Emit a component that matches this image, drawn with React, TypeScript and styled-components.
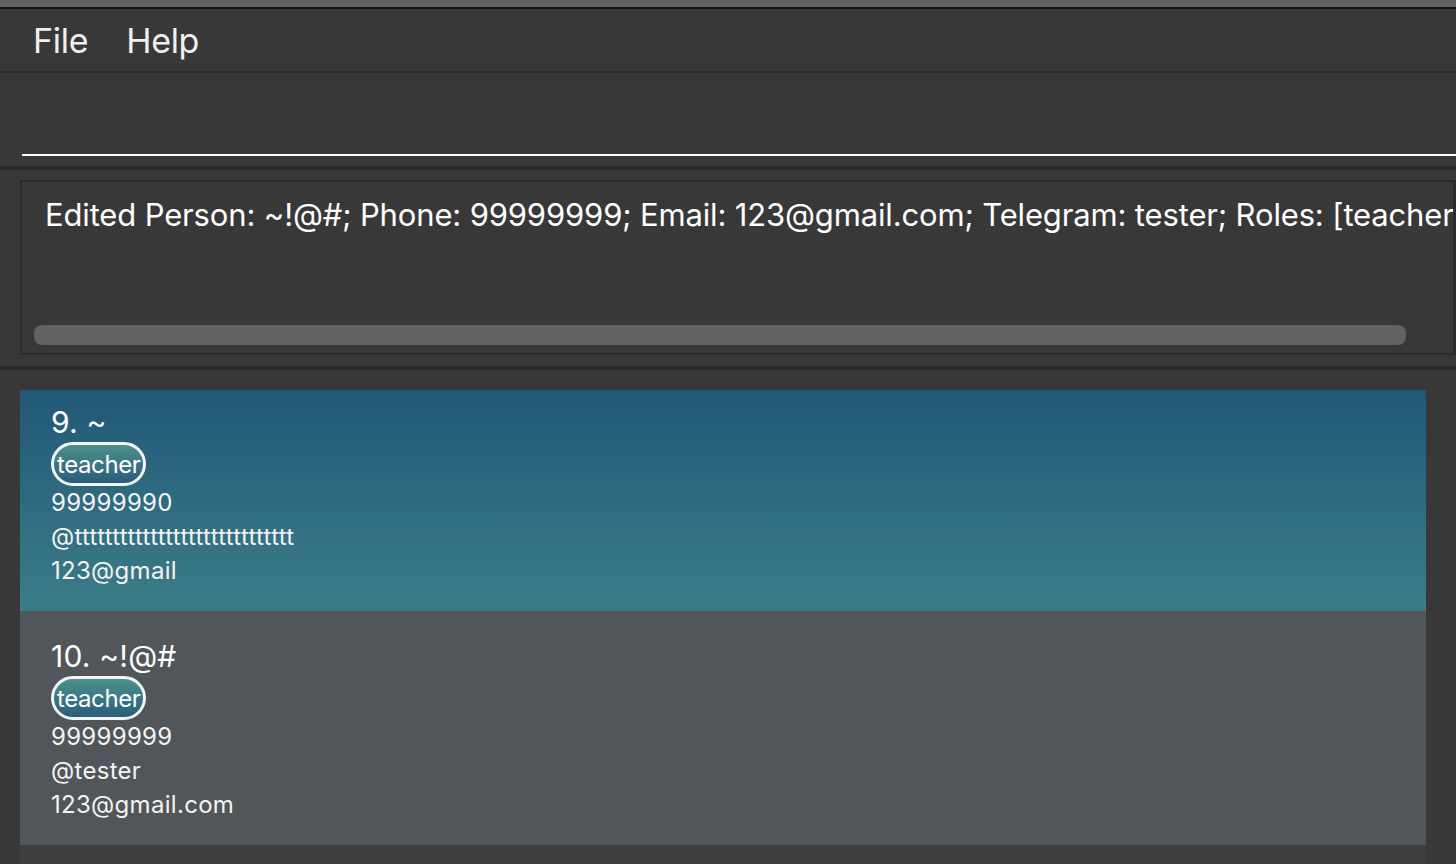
import React from "react";
import styled, { createGlobalStyle } from "styled-components";

const Global = createGlobalStyle`
  html, body { margin: 0; padding: 0; background: #383838; overflow: hidden; }
  body { font-family: Inter, "Noto Sans", "Liberation Sans", sans-serif; }
  #root { width: 1456px; height: 864px; }
`;

const Window = styled.div`
  width: 1456px;
  height: 864px;
  display: flex;
  flex-direction: column;
  background: #383838;
  overflow: hidden;
`;

const TitleStrip = styled.div`
  height: 7px;
  background: #616161;
  border-bottom: 2px solid #141414;
  flex: none;
`;

const MenuBar = styled.div`
  height: 62px;
  flex: none;
  display: flex;
  align-items: center;
  gap: 38px;
  padding-left: 33px;
  border-bottom: 2px solid #2b2b2b;
  background: #383838;
`;

const MenuItem = styled.span`
  color: #efefef;
  font-size: 34px;
  letter-spacing: -0.3px;
`;

const CommandSection = styled.div`
  height: 93px;
  flex: none;
  display: flex;
  align-items: flex-end;
  padding: 0 0 10px 22px;
  box-sizing: border-box;
`;

const CommandInput = styled.div`
  flex: 1;
  height: 40px;
  border-bottom: 2px solid #ffffff;
`;

const Divider = styled.div`
  height: 4px;
  flex: none;
  background: #2b2b2b;
`;

const ResultSection = styled.div`
  height: 196px;
  flex: none;
  box-sizing: border-box;
  padding: 10px 0 11px 20px;
  display: flex;
`;

const ResultBox = styled.div`
  flex: 1;
  border: 2px solid #2b2b2b;
  border-right-width: 3px;
  display: flex;
  flex-direction: column;
  justify-content: space-between;
  padding: 14px 0 8px 12px;
  overflow: hidden;
  min-width: 0;
`;

const ResultText = styled.div`
  color: #ffffff;
  font-size: 31px;
  white-space: nowrap;
  padding-left: 11px;
  letter-spacing: -0.15px;
`;

const ScrollBar = styled.div`
  width: 1372px;
  height: 20px;
  border-radius: 8px;
  background: #626262;
`;

const ListSection = styled.div`
  flex: 1;
  min-height: 0;
  padding: 20px 30px 0 20px;
  display: flex;
`;

const ListViewport = styled.div`
  flex: 1;
  background: #3c3e40;
  overflow: hidden;
`;

const ListInner = styled.div`
  margin-top: -13px;
  display: flex;
  flex-direction: column;
`;

const Card = styled.div<{ $selected?: boolean }>`
  height: 234px;
  box-sizing: border-box;
  padding: 25px 0 0 31px;
  display: flex;
  flex-direction: column;
  align-items: flex-start;
  background: ${(p) =>
    p.$selected ? "linear-gradient(180deg, #1f5677 0%, #3b7d87 100%)" : "#51565a"};
`;

const Name = styled.div`
  color: #ffffff;
  font-size: 30px;
  line-height: 40px;
  height: 40px;
  letter-spacing: 0.2px;
`;

const Tag = styled.span`
  height: 44px;
  box-sizing: border-box;
  display: inline-flex;
  align-items: center;
  padding: 0 3px;
  border: 3px solid #f2f4f5;
  border-radius: 22px;
  background: linear-gradient(180deg, #4c918d 0%, #2a5d7a 100%);
  color: #ffffff;
  font-size: 24px;
  letter-spacing: -0.4px;
`;

const Detail = styled.div`
  color: #f3f3f3;
  font-size: 24px;
  line-height: 34px;
  height: 34px;
  letter-spacing: 0.3px;
`;

type Person = { idx: number; name: string; tag: string; phone: string; tg: string; email: string; selected?: boolean };

const people: Person[] = [
  { idx: 9, name: "~", tag: "teacher", phone: "99999990", tg: "@ttttttttttttttttttttttttttttt", email: "123@gmail", selected: true },
  { idx: 10, name: "~!@#", tag: "teacher", phone: "99999999", tg: "@tester", email: "123@gmail.com" },
];

export default function App() {
  return (
    <>
      <Global />
      <Window>
        <TitleStrip />
        <MenuBar>
          <MenuItem>File</MenuItem>
          <MenuItem>Help</MenuItem>
        </MenuBar>
        <CommandSection>
          <CommandInput />
        </CommandSection>
        <Divider />
        <ResultSection>
          <ResultBox>
            <ResultText>
              Edited Person: ~!@#; Phone: 99999999; Email: 123@gmail.com; Telegram: tester; Roles: [teacher]
            </ResultText>
            <ScrollBar />
          </ResultBox>
        </ResultSection>
        <Divider />
        <ListSection>
          <ListViewport>
            <ListInner>
              {people.map((p) => (
                <Card key={p.idx} $selected={p.selected}>
                  <Name>
                    {p.idx}. {p.name}
                  </Name>
                  <Tag>{p.tag}</Tag>
                  <Detail>{p.phone}</Detail>
                  <Detail>{p.tg}</Detail>
                  <Detail>{p.email}</Detail>
                </Card>
              ))}
            </ListInner>
          </ListViewport>
        </ListSection>
      </Window>
    </>
  );
}
